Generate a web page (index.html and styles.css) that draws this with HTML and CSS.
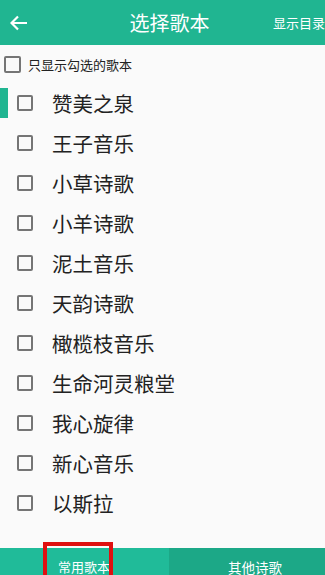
FILE: index.html
```html
<!DOCTYPE html>
<html lang="zh">
<head>
<meta charset="utf-8">
<link rel="stylesheet" href="styles.css">
</head>
<body>
<div class="app">
  <header class="topbar">
    <svg class="back" width="18" height="16" viewBox="0 0 18 16"><path d="M17 8H2M8 1.5L1.5 8 8 14.5" fill="none" stroke="#fff" stroke-width="2.2"/></svg>
    <div class="title">选择歌本</div>
    <div class="toc">显示目录</div>
  </header>
  <div class="filter">
    <span class="box small"></span>
    <span class="filter-text">只显示勾选的歌本</span>
  </div>
  <ul class="list">
    <li class="item active"><span class="box"></span><span class="name">赞美之泉</span></li>
    <li class="item"><span class="box"></span><span class="name">王子音乐</span></li>
    <li class="item"><span class="box"></span><span class="name">小草诗歌</span></li>
    <li class="item"><span class="box"></span><span class="name">小羊诗歌</span></li>
    <li class="item"><span class="box"></span><span class="name">泥土音乐</span></li>
    <li class="item"><span class="box"></span><span class="name">天韵诗歌</span></li>
    <li class="item"><span class="box"></span><span class="name">橄榄枝音乐</span></li>
    <li class="item"><span class="box"></span><span class="name">生命河灵粮堂</span></li>
    <li class="item"><span class="box"></span><span class="name">我心旋律</span></li>
    <li class="item"><span class="box"></span><span class="name">新心音乐</span></li>
    <li class="item"><span class="box"></span><span class="name">以斯拉</span></li>
  </ul>
  <nav class="tabs">
    <div class="tab tab-on"><span class="tab-label">常用歌本</span><span class="mark"></span></div>
    <div class="tab tab-off"><span class="tab-label">其他诗歌</span></div>
  </nav>
</div>
</body>
</html>
```

FILE: styles.css
```css
* { box-sizing: border-box; margin: 0; padding: 0; }
html, body { width: 325px; height: 575px; overflow: hidden; }
body { background: #fafafa; font-family: "Noto Sans CJK SC", "Noto Sans", sans-serif; color: #333; }
.app { display: flex; flex-direction: column; height: 575px; }
.topbar {
  height: 45px; background: #20b591; display: flex; align-items: center;
  position: relative; color: #fff; flex-shrink: 0;
}
.back { margin-left: 10px; }
.title { position: absolute; left: 0; right: 0; text-align: center; font-size: 20px; padding-left: 14px; line-height: 45px; pointer-events: none; }
.toc { margin-left: auto; margin-right: 0; font-size: 13px; white-space: nowrap; position: relative; }
.filter { height: 39px; display: flex; align-items: center; padding-left: 4px; flex-shrink: 0; }
.box { width: 16px; height: 16px; border: 2px solid #757575; border-radius: 2px; flex-shrink: 0; }
.box.small { width: 17px; height: 17px; }
.filter-text { font-size: 13px; margin-left: 7px; color: #222; }
.list { list-style: none; margin-top: -1px; }
.item { height: 40px; display: flex; align-items: center; padding-left: 17px; position: relative; }
.item.active::before { content: ""; position: absolute; left: 0; top: 5px; width: 8px; height: 30px; background: #20b591; }
.name { margin-left: 19px; font-size: 20.5px; color: #222; }
.tabs { margin-top: auto; height: 27px; display: flex; flex-shrink: 0; }
.tab { display: flex; align-items: flex-start; color: #fff; font-size: 13px; position: relative; padding-top: 9px; }
.tab-on { width: 169px; background: #20bb99; padding-left: 58px; }
.tab-off { flex: 1; background: #1ca887; padding-left: 59px; font-size: 13.5px; }
.tab-label { line-height: 20px; }
.mark { position: absolute; left: 43px; top: -6px; width: 70px; height: 40px; border: 4px solid #e01010; }
```
